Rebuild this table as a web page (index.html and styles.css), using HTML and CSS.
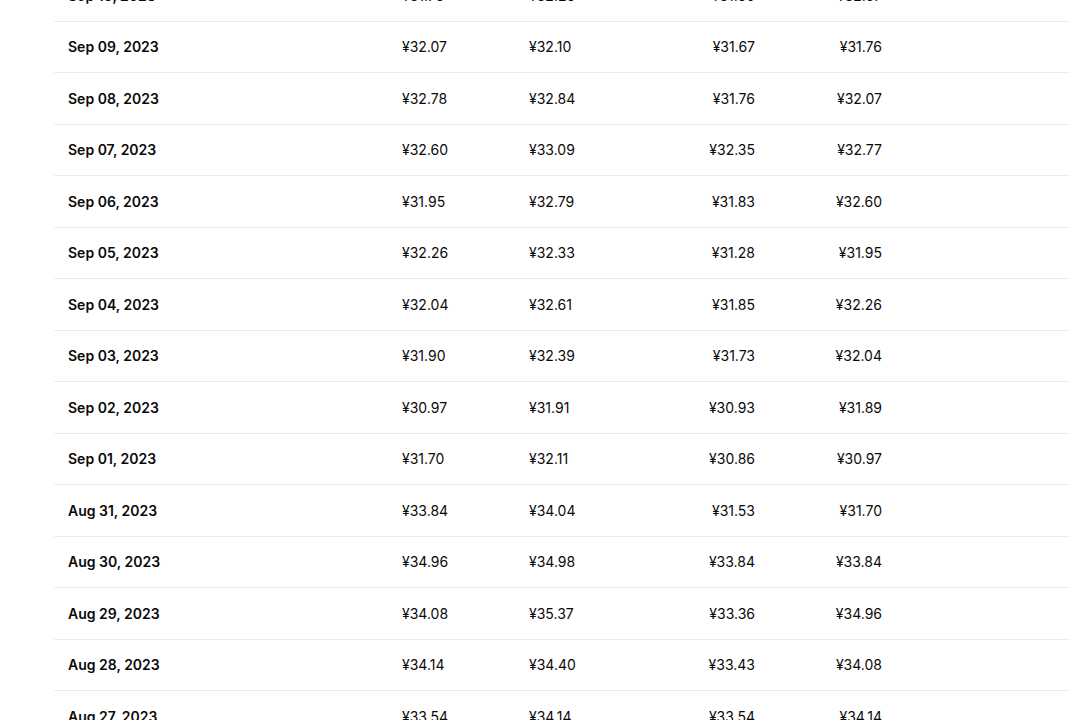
FILE: index.html
```html
<!DOCTYPE html>
<html>
<head>
<meta charset="utf-8">
<link rel="stylesheet" href="styles.css">
</head>
<body>
<div class="wrap">
  <div class="table">
    <div class="row"><div class="c date">Sep 10, 2023</div><div class="c l">¥31.76</div><div class="c l">¥32.26</div><div class="c r">¥31.60</div><div class="c r">¥32.07</div><div class="c"></div></div>
    <div class="row"><div class="c date">Sep 09, 2023</div><div class="c l">¥32.07</div><div class="c l">¥32.10</div><div class="c r">¥31.67</div><div class="c r">¥31.76</div><div class="c"></div></div>
    <div class="row"><div class="c date">Sep 08, 2023</div><div class="c l">¥32.78</div><div class="c l">¥32.84</div><div class="c r">¥31.76</div><div class="c r">¥32.07</div><div class="c"></div></div>
    <div class="row"><div class="c date">Sep 07, 2023</div><div class="c l">¥32.60</div><div class="c l">¥33.09</div><div class="c r">¥32.35</div><div class="c r">¥32.77</div><div class="c"></div></div>
    <div class="row"><div class="c date">Sep 06, 2023</div><div class="c l">¥31.95</div><div class="c l">¥32.79</div><div class="c r">¥31.83</div><div class="c r">¥32.60</div><div class="c"></div></div>
    <div class="row"><div class="c date">Sep 05, 2023</div><div class="c l">¥32.26</div><div class="c l">¥32.33</div><div class="c r">¥31.28</div><div class="c r">¥31.95</div><div class="c"></div></div>
    <div class="row"><div class="c date">Sep 04, 2023</div><div class="c l">¥32.04</div><div class="c l">¥32.61</div><div class="c r">¥31.85</div><div class="c r">¥32.26</div><div class="c"></div></div>
    <div class="row"><div class="c date">Sep 03, 2023</div><div class="c l">¥31.90</div><div class="c l">¥32.39</div><div class="c r">¥31.73</div><div class="c r">¥32.04</div><div class="c"></div></div>
    <div class="row"><div class="c date">Sep 02, 2023</div><div class="c l">¥30.97</div><div class="c l">¥31.91</div><div class="c r">¥30.93</div><div class="c r">¥31.89</div><div class="c"></div></div>
    <div class="row"><div class="c date">Sep 01, 2023</div><div class="c l">¥31.70</div><div class="c l">¥32.11</div><div class="c r">¥30.86</div><div class="c r">¥30.97</div><div class="c"></div></div>
    <div class="row"><div class="c date">Aug 31, 2023</div><div class="c l">¥33.84</div><div class="c l">¥34.04</div><div class="c r">¥31.53</div><div class="c r">¥31.70</div><div class="c"></div></div>
    <div class="row"><div class="c date">Aug 30, 2023</div><div class="c l">¥34.96</div><div class="c l">¥34.98</div><div class="c r">¥33.84</div><div class="c r">¥33.84</div><div class="c"></div></div>
    <div class="row"><div class="c date">Aug 29, 2023</div><div class="c l">¥34.08</div><div class="c l">¥35.37</div><div class="c r">¥33.36</div><div class="c r">¥34.96</div><div class="c"></div></div>
    <div class="row"><div class="c date">Aug 28, 2023</div><div class="c l">¥34.14</div><div class="c l">¥34.40</div><div class="c r">¥33.43</div><div class="c r">¥34.08</div><div class="c"></div></div>
    <div class="row"><div class="c date">Aug 27, 2023</div><div class="c l">¥33.54</div><div class="c l">¥34.14</div><div class="c r">¥33.54</div><div class="c r">¥34.14</div><div class="c"></div></div>
  </div>
</div>
</body>
</html>
```
FILE: styles.css
```css
html, body {
  margin: 0;
  padding: 0;
  background: #ffffff;
  overflow: hidden;
}
body {
  font-family: Inter, "Liberation Sans", sans-serif;
  font-size: 14px;
  color: #0a0a0a;
}
.wrap {
  margin-left: 54px;
  margin-top: -30px;
  width: 1100px;
}
.row {
  display: grid;
  grid-template-columns: 334px 127px 126px 128px 127px 1fr;
  border-bottom: 1px solid #ececec;
}
.c {
  padding: 16.5px 14px 16px;
  line-height: 18px;
  white-space: nowrap;
}
.date {
  font-weight: 600;
}
.l { text-align: left; }
.r { text-align: right; }
```
